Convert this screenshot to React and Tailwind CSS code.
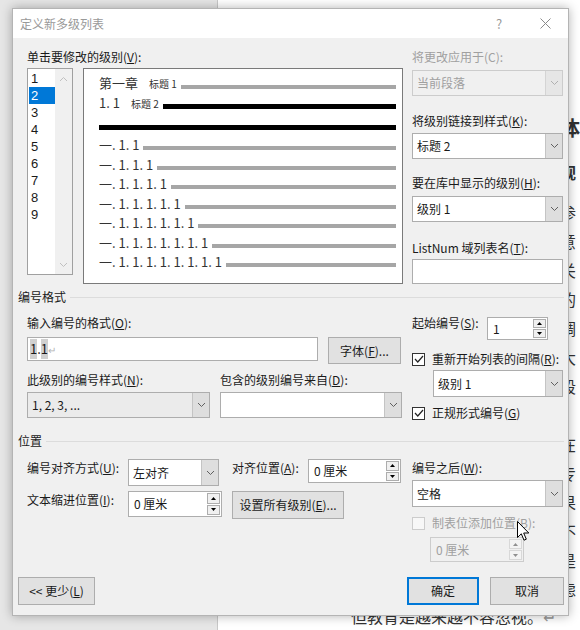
import React from "react";

const U = ({ children }) => <span className="underline">{children}</span>;

const Chevron = ({ up }) => (
  <svg width="9" height="6" viewBox="0 0 9 6">
    <polyline
      points={up ? "1,5 4.5,1.5 8,5" : "1,1 4.5,4.5 8,1"}
      fill="none"
      stroke="currentColor"
      strokeWidth="1"
    />
  </svg>
);

const Tri = ({ up }) => (
  <svg width="5" height="3" viewBox="0 0 5 3">
    <polygon points={up ? "0,3 2.5,0 5,3" : "0,0 5,0 2.5,3"} fill="currentColor" />
  </svg>
);

const Label = ({ children, className = "", disabled }) => (
  <div
    className={`h-[16px] whitespace-nowrap text-[12px] leading-[16px] ${
      disabled ? "text-[#a0a0a0]" : "text-[#1a1a1a]"
    } ${className}`}
  >
    {children}
  </div>
);

function Combo({ value, className = "", gray, disabled }) {
  let box = "border-[#adadad] bg-white text-[#1a1a1a]";
  if (gray) box = "border-[#adadad] bg-[#ebebeb] text-[#1a1a1a]";
  if (disabled) box = "border-[#cccccc] bg-[#f0f0f0] text-[#a0a0a0]";
  return (
    <div className={`flex border ${box} ${className}`}>
      <div className="flex flex-1 items-center whitespace-nowrap pl-[4px] text-[12px]">{value}</div>
      <div
        className={`flex w-[17px] items-center justify-center border-l ${
          disabled ? "border-[#d4d4d4] bg-[#e6e6e6] text-[#b0b0b0]" : "border-[#c4c4c4] bg-[#dedede] text-[#606060]"
        }`}
      >
        <Chevron />
      </div>
    </div>
  );
}

function Spin({ value, className = "", disabled }) {
  return (
    <div
      className={`flex border ${
        disabled ? "border-[#cccccc] bg-[#f0f0f0] text-[#a0a0a0]" : "border-[#adadad] bg-white text-[#1a1a1a]"
      } ${className}`}
    >
      <div className="flex flex-1 items-center whitespace-nowrap pl-[5px] text-[12px]">{value}</div>
      <div className="flex w-[14px] flex-col justify-center gap-[1px] py-[1px] pr-[1px]">
        <div
          className={`flex flex-1 items-center justify-center border ${
            disabled ? "border-[#d8d8d8] bg-[#f4f4f4] text-[#909090]" : "border-[#adadad] bg-[#f0f0f0] text-black"
          }`}
        >
          <Tri up />
        </div>
        <div
          className={`flex flex-1 items-center justify-center border ${
            disabled ? "border-[#d8d8d8] bg-[#f4f4f4] text-[#909090]" : "border-[#adadad] bg-[#f0f0f0] text-black"
          }`}
        >
          <Tri />
        </div>
      </div>
    </div>
  );
}

const Check = ({ checked, disabled, children }) => (
  <div className="flex h-[16px] items-center gap-[7px] whitespace-nowrap">
    <div
      className={`flex h-[13px] w-[13px] items-center justify-center border ${
        disabled ? "border-[#cccccc] bg-[#f7f7f7]" : "border-[#333333] bg-white"
      }`}
    >
      {checked && (
        <svg width="10" height="8" viewBox="0 0 10 8">
          <polyline points="1,4 3.8,7 9,1" fill="none" stroke="#222" strokeWidth="1.2" />
        </svg>
      )}
    </div>
    <span className={`text-[12px] leading-[16px] ${disabled ? "text-[#a0a0a0]" : "text-[#1a1a1a]"}`}>{children}</span>
  </div>
);

const Btn = ({ children, className = "", primary }) => (
  <div
    className={`flex items-center justify-center whitespace-nowrap bg-[#e1e1e1] text-[12px] text-[#1a1a1a] ${
      primary ? "border-2 border-[#0078d7]" : "border border-[#adadad]"
    } ${className}`}
  >
    {children}
  </div>
);

const GroupHeader = ({ title }) => (
  <div className="-ml-[9px] flex h-[16px] items-center">
    <span className="text-[12px] leading-[16px] text-[#1a1a1a]">{title}</span>
    <div className="ml-[4px] h-px flex-1 bg-[#dcdcdc]" />
  </div>
);

const Line = ({ black }) => (
  <div className={`ml-[4px] mt-[7px] flex-1 ${black ? "h-[5px] bg-black" : "h-[4px] bg-[#a6a6a6]"}`} />
);

const deepLevels = [
  "一. 1. 1",
  "一. 1. 1. 1",
  "一. 1. 1. 1. 1",
  "一. 1. 1. 1. 1. 1",
  "一. 1. 1. 1. 1. 1. 1",
  "一. 1. 1. 1. 1. 1. 1. 1",
  "一. 1. 1. 1. 1. 1. 1. 1. 1",
];

// only the glyphs of the document that peek out beside the dialog
const docEdge = ["参", "意", "关", "的", "调", "大", "段", "。", "在", "专", "果", "不", "是", "虑"];

export default function App() {
  return (
    <div className="relative flex h-[630px] w-[580px] overflow-hidden font-['Noto_Sans_CJK_SC',sans-serif]">
      {/* background: word window */}
      <div className="w-[228px] border-r border-[#c8c8c8] bg-[#e6e6e6]" />
      <div className="flex-1 bg-white pt-[113px] text-[#333]">
        <div className="h-[30px] whitespace-nowrap pl-[342px] text-[20px] font-bold leading-[30px]">体</div>
        <div className="mt-[15px] h-[29px] whitespace-nowrap pl-[342px] text-[16px] font-bold leading-[29px]">观</div>
        <div className="mt-[11px]">
          {docEdge.map((c, i) => (
            <div key={i} className="h-[29px] whitespace-nowrap pl-[342px] text-[16px] leading-[29px]">
              {c}
            </div>
          ))}
          <div className="mt-[-2px] h-[29px] whitespace-nowrap pl-[133px] text-[16px] leading-[29px]">
            但教育是越来越不容忽视。<span className="text-[#999]">↵</span>
          </div>
        </div>
      </div>

      {/* dialog */}
      <div className="absolute left-[12px] top-[8px] flex h-[608px] w-[557px] flex-col border border-[#b4b4b4] bg-[#f0f0f0] shadow-[0_0_10px_rgba(0,0,0,0.3)]">
        <div className="flex h-[29px] items-center bg-white">
          <span className="pl-[7px] text-[12px] text-[#999999]">定义新多级列表</span>
          <div className="ml-auto flex h-full">
            <div className="flex w-[46px] items-center justify-center text-[13px] text-[#999999]">?</div>
            <div className="flex w-[46px] items-center justify-center text-[#8a8a8a]">
              <svg width="11" height="11" viewBox="0 0 11 11">
                <path d="M0.5 0.5 L10.5 10.5 M10.5 0.5 L0.5 10.5" stroke="currentColor" strokeWidth="1" />
              </svg>
            </div>
          </div>
        </div>

        <div className="flex flex-1 flex-col pl-[14px] pr-[4px]">
          {/* top section */}
          <div className="mt-[11px] flex">
            <div className="w-[376px]">
              <Label>
                单击要修改的级别(<U>V</U>):
              </Label>
              <div className="mt-[3px] flex items-start">
                <div className="flex h-[207px] w-[46px] border border-[#a0a0a0] bg-white">
                  <div className="w-[26px] pl-px pt-px font-['Liberation_Sans',sans-serif]">
                    {[1, 2, 3, 4, 5, 6, 7, 8, 9].map((n) => (
                      <div
                        key={n}
                        className={`h-[17px] w-[26px] pl-[2px] text-[13px] leading-[17px] ${
                          n === 2 ? "bg-[#0078d7] text-white" : "text-[#1a1a1a]"
                        }`}
                      >
                        {n}
                      </div>
                    ))}
                  </div>
                  <div className="ml-auto flex w-[17px] flex-col items-center justify-between bg-[#f0f0f0] pb-[6px] pt-[7px] text-[#c0c0c0]">
                    <Chevron up />
                    <Chevron />
                  </div>
                </div>
                <div className="ml-[10px] h-[216px] w-[320px] border border-[#7a7a7a] bg-white pl-[15px] pr-[6px] pt-[4px] text-[#333]">
                  <div className="flex h-[20px] items-center">
                    <span className="text-[13px]">第一章</span>
                    <span className="ml-[11px] text-[10px]">标题 1</span>
                    <Line />
                  </div>
                  <div className="flex h-[20px] items-center">
                    <span className="text-[13px]">1. 1</span>
                    <span className="ml-[11px] text-[10px]">标题 2</span>
                    <Line black />
                  </div>
                  <div className="flex h-[22px] items-center">
                    <div className="mt-[7px] h-[5px] flex-1 bg-black" />
                  </div>
                  {deepLevels.map((t) => (
                    <div key={t} className="flex h-[19.5px] items-center">
                      <span className="whitespace-nowrap text-[13px]">{t}</span>
                      <Line />
                    </div>
                  ))}
                </div>
              </div>
            </div>
            <div className="ml-[9px] w-[151px]">
              <Label disabled>将更改应用于(C):</Label>
              <Combo value="当前段落" disabled className="mt-[5px] h-[26px]" />
              <Label className="mt-[17px]">
                将级别链接到样式(<U>K</U>):
              </Label>
              <Combo value="标题 2" className="mt-[4px] h-[26px]" />
              <Label className="mt-[16px]">
                要在库中显示的级别(<U>H</U>):
              </Label>
              <Combo value="级别 1" className="mt-[5px] h-[26px]" />
              <Label className="mt-[18px]">
                ListNum 域列表名(<U>T</U>):
              </Label>
              <div className="mt-[3px] h-[25px] border border-[#adadad] bg-white" />
            </div>
          </div>

          {/* 编号格式 */}
          <div className="mt-[5px]">
            <GroupHeader title="编号格式" />
          </div>
          <div className="flex">
            <div className="w-[376px]">
              <Label className="mt-[10px]">
                输入编号的格式(<U>O</U>):
              </Label>
              <div className="mt-[6px] flex items-start">
                <div className="flex h-[24px] w-[291px] items-center border border-[#adadad] bg-white pl-[2px] text-[13px] text-[#1a1a1a]">
                  <span className="bg-[#d0d0d0]">1</span>.<span className="bg-[#d0d0d0]">1</span>
                  <span className="text-[10px] text-[#b4b4b4]">↵</span>
                </div>
                <Btn className="ml-[10px] h-[27px] w-[73px]">
                  字体(<U>F</U>)...
                </Btn>
              </div>
              <div className="mt-[8px] grid grid-cols-[193px_1fr]">
                <Label>
                  此级别的编号样式(<U>N</U>):
                </Label>
                <Label>
                  包含的级别编号来自(<U>D</U>):
                </Label>
              </div>
              <div className="mt-[4px] flex">
                <Combo value="1, 2, 3, ..." gray className="h-[26px] w-[183px]" />
                <Combo value="" className="ml-[10px] h-[26px] w-[182px]" />
              </div>
            </div>
            <div className="ml-[9px] w-[151px]">
              <div className="mt-[12px] flex items-start">
                <Label className="-mt-[2px] w-[75px]">
                  起始编号(<U>S</U>):
                </Label>
                <Spin value="1" className="h-[23px] w-[61px]" />
              </div>
              <div className="mt-[11px]">
                <Check checked>
                  重新开始列表的间隔(<U>R</U>):
                </Check>
              </div>
              <Combo value="级别 1" className="ml-[21px] mt-[3px] h-[27px]" />
              <div className="mt-[8px]">
                <Check checked>
                  正规形式编号(<U>G</U>)
                </Check>
              </div>
            </div>
          </div>

          {/* 位置 */}
          <div className="mt-[12px]">
            <GroupHeader title="位置" />
          </div>
          <div className="flex">
            <div className="w-[376px]">
              <div className="mt-[10px] flex items-start">
                <Label className="mt-px w-[101px]">
                  编号对齐方式(<U>U</U>):
                </Label>
                <Combo value="左对齐" className="h-[27px] w-[91px]" />
                <Label className="ml-[13px] mt-px w-[76px]">
                  对齐位置(<U>A</U>):
                </Label>
                <Spin value="0 厘米" className="h-[24px] w-[93px]" />
              </div>
              <div className="mt-[5px] flex items-start">
                <Label className="mt-px w-[101px]">
                  文本缩进位置(<U>I</U>):
                </Label>
                <Spin value="0 厘米" className="h-[26px] w-[94px]" />
                <Btn className="ml-[10px] h-[28px] w-[112px]">
                  设置所有级别(<U>E</U>)...
                </Btn>
              </div>
            </div>
            <div className="ml-[9px] w-[151px]">
              <Label className="mt-[11px]">
                编号之后(<U>W</U>):
              </Label>
              <Combo value="空格" className="mt-[4px] h-[27px]" />
              <div className="mt-[8px]">
                <Check disabled>制表位添加位置(B):</Check>
              </div>
              <Spin value="0 厘米" disabled className="ml-[18px] mt-[6px] h-[25px] w-[94px]" />
            </div>
          </div>

          {/* footer */}
          <div className="mt-[15px] flex">
            <Btn className="-ml-[9px] h-[28px] w-[77px]">
              &lt;&lt; 更少(<U>L</U>)
            </Btn>
            <Btn primary className="ml-auto h-[28px] w-[72px]">
              确定
            </Btn>
            <Btn className="ml-[11px] h-[28px] w-[74px]">取消</Btn>
          </div>
        </div>

        {/* mouse cursor */}
        <svg className="absolute left-[504px] top-[512px]" width="13" height="21" viewBox="0 0 13 21">
          <path d="M0.5 0.5 L0.5 16.5 L4.3 12.8 L7 19.2 L9.3 18.2 L6.7 12 L11.8 12 Z" fill="white" stroke="black" strokeWidth="1" />
        </svg>
      </div>
    </div>
  );
}
